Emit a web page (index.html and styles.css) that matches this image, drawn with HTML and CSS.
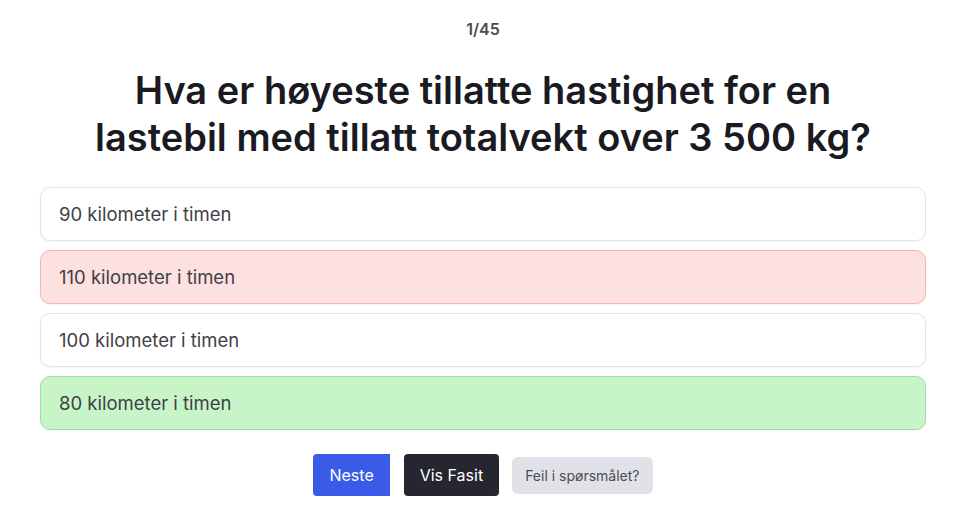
FILE: index.html
```html
<!DOCTYPE html>
<html lang="no">
<head>
    <meta charset="UTF-8">
    <meta name="viewport" content="width=device-width, initial-scale=1.0">
    <title>Teoriprøve - Spørsmål 1</title>
    <link rel="stylesheet" href="styles.css">
</head>
<body>
    <div class="quiz">
        <div class="counter">1/45</div>

        <h1 class="question">Hva er høyeste tillatte hastighet for en lastebil med tillatt totalvekt over 3 500 kg?</h1>

        <div class="options">
            <div class="option">90 kilometer i timen</div>
            <div class="option wrong">110 kilometer i timen</div>
            <div class="option">100 kilometer i timen</div>
            <div class="option correct">80 kilometer i timen</div>
        </div>

        <div class="actions">
            <button class="btn btn-next">Neste</button>
            <button class="btn btn-answer">Vis Fasit</button>
            <button class="btn btn-report">Feil i spørsmålet?</button>
        </div>
    </div>
</body>
</html>
```

FILE: styles.css
```css
* {
    margin: 0;
    padding: 0;
    box-sizing: border-box;
}

body {
    font-family: Inter, 'Noto Sans', sans-serif;
    background-color: #fff;
    color: #1d1d25;
}

.quiz {
    width: 886px;
    margin: 0 0 0 40px;
    padding-top: 19px;
}

.counter {
    text-align: center;
    font-size: 16px;
    font-weight: 600;
    color: #4b4b58;
    line-height: 20px;
}

.question {
    margin: 28px auto 26px;
    width: 805px;
    text-align: center;
    font-size: 38px;
    font-weight: 600;
    line-height: 47px;
    color: #1a1a22;
}

.options {
    display: flex;
    flex-direction: column;
    gap: 9px;
}

.option {
    height: 54px;
    display: flex;
    align-items: center;
    padding-left: 18px;
    font-size: 18.5px;
    color: #3f3f46;
    background: #fff;
    border: 1px solid #e4e4e7;
    border-radius: 10px;
    box-shadow: 0 1px 2px rgba(0,0,0,0.05);
}

.option.wrong {
    background: #fde0e0;
    border-color: #f8b4b4;
}

.option.correct {
    background: #c8f5c8;
    border-color: #9ee09e;
}

.actions {
    display: flex;
    justify-content: center;
    align-items: center;
    gap: 14px;
    margin-top: 24px;
}

.btn {
    border: none;
    font-family: inherit;
    font-size: 16px;
    color: #fff;
    height: 42px;
    padding: 0 16px;
    border-radius: 4px;
    cursor: pointer;
}

.btn-next {
    background: #3a5be8;
    border-radius: 4px 0 0 4px;
}

.btn-answer {
    background: #262631;
}

.btn-report {
    margin-left: -1px;
    height: 37px;
    padding: 0 13px;
    font-size: 14px;
    color: #4b4b58;
    background: #e1e2e7;
    border-radius: 6px;
}
```
